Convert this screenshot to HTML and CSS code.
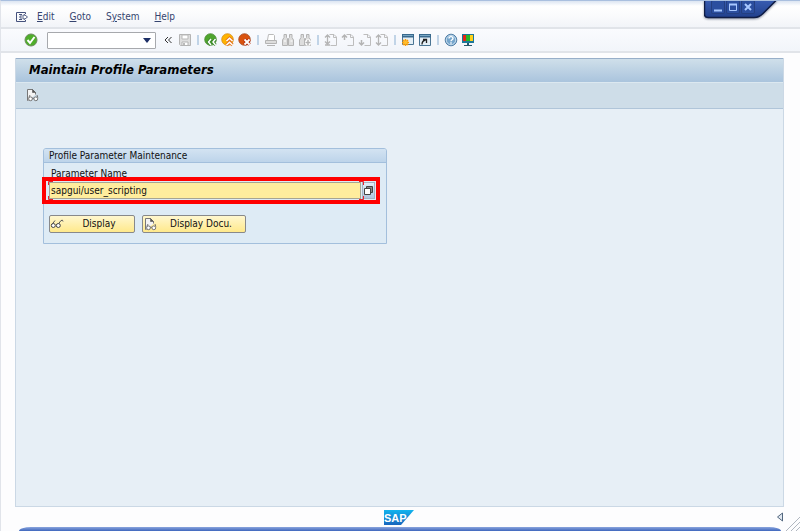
FILE: index.html
```html
<!DOCTYPE html>
<html lang="en">
<head>
    <meta charset="UTF-8">
    <meta name="viewport" content="width=device-width, initial-scale=1.0">
    <title>Maintain Profile Parameters</title>
    <link rel="stylesheet" href="styles.css">
</head>
<body>
    <!-- Shared icon shapes -->
    <svg class="sprite" aria-hidden="true">
        <symbol id="i-doc-glasses" viewBox="0 0 14 14">
            <path d="M3.500 12.500h-1V1.500h5l3 3v2" fill="#f4f4f4" stroke="#777"/>
            <path d="M7.500 1.500v3h3z" fill="#555" stroke="#555" stroke-width=".6"/>
            <path d="M5 7L3.800 9.500M12 7l.8 2.500M7 10.500q1-1 2 0" fill="none" stroke="#666" stroke-width=".9"/>
            <circle cx="5.500" cy="10.800" r="1.900" fill="#fff" stroke="#666" stroke-width=".9"/>
            <circle cx="10.800" cy="10.800" r="1.900" fill="#fff" stroke="#666" stroke-width=".9"/>
        </symbol>
        <symbol id="i-page" viewBox="0 0 14 14">
            <path d="M5.500 1.500h4.500l2.500 2.500v8.500h-6M9.500 1.500v3h3" fill="none" stroke="#bdbdbd"/>
        </symbol>
    </svg>

    <div class="window">
        <div class="window-controls">
            <svg class="controls-shape" viewBox="0 0 96 20" aria-hidden="true">
                <defs>
                    <linearGradient id="tab" x1="0" y1="0" x2="0" y2="1">
                        <stop offset="0" stop-color="#395db2"/>
                        <stop offset="1" stop-color="#203f8b"/>
                    </linearGradient>
                </defs>
                <path d="M0 0V14Q0 18 4 18H50Q55 18 59 14L73 0z" fill="url(#tab)"/>
                <path d="M.5 0V14Q.5 17.500 4 17.500H50Q55 17.500 59 13.500L72.500 0" fill="none" stroke="#101d45" stroke-width="1.500"/>
            </svg>
            <button aria-label="Minimize"><svg viewBox="0 0 12 12"><path d="M2 9.500h8" stroke="#a9c8ff" stroke-width="2"/></svg></button>
            <button aria-label="Maximize"><svg viewBox="0 0 12 12"><path d="M2.500 3v6.500h7V3" fill="none" stroke="#a9c8ff"/><path d="M2 3.500h8" stroke="#a9c8ff" stroke-width="2"/></svg></button>
            <button aria-label="Close"><svg viewBox="0 0 12 12"><path d="M3 3l6 6M9 3L3 9" stroke="#a9c8ff" stroke-width="2"/></svg></button>
        </div>

        <nav class="menu-bar">
            <button class="icon-button" aria-label="Menu">
                <svg viewBox="0 0 14 14"><path d="M10.500 4V2.500h-9v9h9V10M4 4.500h3M4 9.500h3" fill="none" stroke="#44517c"/><path d="M5 6h4V4.300L12.500 7 9 9.700V8H5z" fill="#fff" stroke="#44517c" stroke-width=".9"/></svg>
            </button>
            <a href="#"><u>E</u>dit</a>
            <a href="#"><u>G</u>oto</a>
            <a href="#">S<u>y</u>stem</a>
            <a href="#"><u>H</u>elp</a>
        </nav>

        <div class="toolbar">
            <button class="icon-button" aria-label="Enter">
                <svg viewBox="0 0 14 14"><circle cx="7" cy="7" r="6" fill="#4fae2b" stroke="#6c8a5c"/><path d="M3.500 7l2.500 3 4.500-6" fill="none" stroke="#fff" stroke-width="2"/></svg>
            </button>
            <div class="command">
                <input type="text" aria-label="Command">
                <svg viewBox="0 0 8 5" aria-hidden="true"><path d="M0 0h8L4 5z" fill="#1d2f66"/></svg>
            </div>
            <button class="icon-button" aria-label="Hide command field">
                <svg viewBox="0 0 14 14"><path d="M7 4L4 7l3 3M10.500 4l-3 3 3 3" fill="none" stroke="#333"/></svg>
            </button>
            <button class="icon-button" aria-label="Save" disabled>
                <svg viewBox="0 0 14 14"><path d="M1.500 1.500h11v11h-10l-1-1z" fill="#dedede" stroke="#b4b4b4"/><path d="M4 2h6v4H4z" fill="#fff" stroke="#b9b9b9"/><path d="M4 9h6v3.500H4z" fill="#fff" stroke="#b4b4b4"/><path d="M5 10h2v2H5z" fill="#bbb"/></svg>
            </button>
            <span class="separator"></span>
            <button class="icon-button" aria-label="Back">
                <svg viewBox="0 0 14 14"><circle cx="6.500" cy="6.500" r="5.800" fill="#4fa52d" stroke="#4a8936" stroke-width=".8"/><path d="M7 6L4.500 9 7 12M11.500 6L9 9l2.500 3" fill="none" stroke="#35832a" stroke-width="3"/><path d="M7 6L4.500 9 7 12M11.500 6L9 9l2.500 3" fill="none" stroke="#fff" stroke-width="1.500"/></svg>
            </button>
            <button class="icon-button" aria-label="Exit">
                <svg viewBox="0 0 14 14"><circle cx="6.500" cy="6.500" r="5.800" fill="#ffb400" stroke="#d48a1a" stroke-width=".8"/><path d="M5.500 8L8.500 5.200 11.500 8M5.500 12l3-2.800 3 2.800" fill="none" stroke="#e5761c" stroke-width="3.200"/><path d="M5.500 8L8.500 5.200 11.500 8M5.500 12l3-2.800 3 2.800" fill="none" stroke="#fff" stroke-width="1.500"/></svg>
            </button>
            <button class="icon-button" aria-label="Cancel">
                <svg viewBox="0 0 14 14"><circle cx="6.500" cy="6.500" r="5.800" fill="#d9530f" stroke="#a3481f" stroke-width=".8"/><path d="M6.500 6.500l5 5M11.500 6.500l-5 5" stroke="#b5300e" stroke-width="3.600"/><path d="M6.500 6.500l5 5M11.500 6.500l-5 5" stroke="#fff" stroke-width="1.800"/></svg>
            </button>
            <span class="separator"></span>
            <button class="icon-button" aria-label="Print" disabled>
                <svg viewBox="0 0 14 14"><path d="M3.500 7l1-5.500h5l1 1V7" fill="#fff" stroke="#bbb"/><path d="M1.500 7.500h11v3h-11zM3 12.500h8" fill="#ddd" stroke="#b4b4b4"/></svg>
            </button>
            <button class="icon-button" aria-label="Find" disabled>
                <svg viewBox="0 0 14 14"><path d="M3 1.500h2.500v3l1 1v7h-5V7L3 4.500zM8.500 1.500H11v3L12.500 7v5.500h-5v-7l1-1z" fill="#ddd" stroke="#b4b4b4"/><path d="M3 8h2M9.500 8h2" stroke="#fff"/></svg>
            </button>
            <button class="icon-button" aria-label="Find next" disabled>
                <svg viewBox="0 0 14 14"><path d="M3 1.500h2.500v3l1 1v7h-5V7L3 4.500zM8.500 1.500H11v3L12.500 7v5.500h-5v-7l1-1z" fill="#ddd" stroke="#b4b4b4"/><path d="M10 6.500v6M7 9.500h6" stroke="#fff" stroke-width="4"/><path d="M10 7v5M7.500 9.500h5" stroke="#b4b4b4" stroke-width="1.500"/></svg>
            </button>
            <span class="separator"></span>
            <button class="icon-button" aria-label="First page" disabled>
                <svg viewBox="0 0 14 14"><use href="#i-page"/><path d="M3.500 2v10M1 4.500L3.500 2 6 4.500M1 8.500L3.500 11 6 8.500M1 12h5" fill="none" stroke="#b4b4b4" stroke-width="1.300"/></svg>
            </button>
            <button class="icon-button" aria-label="Previous page" disabled>
                <svg viewBox="0 0 14 14"><use href="#i-page"/><path d="M3.500 2v5M1 4.500L3.500 2 6 4.500" fill="none" stroke="#b4b4b4" stroke-width="1.500"/></svg>
            </button>
            <button class="icon-button" aria-label="Next page" disabled>
                <svg viewBox="0 0 14 14"><use href="#i-page"/><path d="M3.500 7v5M1 9.500L3.500 12 6 9.500" fill="none" stroke="#b4b4b4" stroke-width="1.500"/></svg>
            </button>
            <button class="icon-button" aria-label="Last page" disabled>
                <svg viewBox="0 0 14 14"><use href="#i-page"/><path d="M3.500 2v10M1 4.500L3.500 2 6 4.500M1 9.500L3.500 12 6 9.500" fill="none" stroke="#b4b4b4" stroke-width="1.300"/></svg>
            </button>
            <span class="separator"></span>
            <button class="icon-button" aria-label="New session">
                <svg viewBox="0 0 14 14"><path d="M1.500 1.500h11v10h-11z" fill="#e4eef5" stroke="#4a7594"/><path d="M1 1h12v3.500H1z" fill="#39698d"/><path d="M2 2.500h10" stroke="#78a6c4"/><path d="M4.500 6v7M1 9.500h7M2 7l5 5M7 7l-5 5" stroke="#ff9c00" stroke-width="1.500"/><circle cx="4.500" cy="9.500" r="1.800" fill="#ffc02c"/></svg>
            </button>
            <button class="icon-button" aria-label="Create shortcut">
                <svg viewBox="0 0 14 14"><path d="M1.500 1.500h11v11h-11z" fill="#e4eef5" stroke="#4a7594"/><path d="M1 1h12v3.500H1z" fill="#39698d"/><path d="M2 2.500h10" stroke="#78a6c4"/><path d="M4 11.500c0-3 1-4 3.500-4.500M5 6.500h3.500V10" fill="none" stroke="#222" stroke-width="1.300"/></svg>
            </button>
            <span class="separator"></span>
            <button class="icon-button" aria-label="Help">
                <svg viewBox="0 0 14 14"><circle cx="7" cy="7" r="5.800" fill="#75a5cc" stroke="#527fa7"/><circle cx="7" cy="7" r="4.700" fill="none" stroke="#d9e8f4" stroke-width=".8"/><path d="M5 5.500C5 3 9 3 9 5.500c0 1.200-2 1.300-2 2.700M7 9.300v1.400" fill="none" stroke="#fff" stroke-width="1.400"/></svg>
            </button>
            <button class="icon-button" aria-label="Customize local layout">
                <svg viewBox="0 0 14 14"><path d="M1 1h12v9H1z" fill="#1d7798"/><path d="M2 2h3v6H2z" fill="#e32719"/><path d="M5 2h4v6H5z" fill="#2bb526"/><path d="M9 2h3v6H9z" fill="#ffd21b"/><path d="M6 10h2v2h3v1H3v-1h3z" fill="#26586c"/></svg>
            </button>
        </div>

        <main class="screen">
            <h1>Maintain Profile Parameters</h1>
            <div class="app-toolbar">
                <button class="icon-button" aria-label="Display documentation"><svg viewBox="0 0 14 14"><use href="#i-doc-glasses"/></svg></button>
            </div>
            <div class="content">
                <form class="group">
                    <h2>Profile Parameter Maintenance</h2>
                    <div class="group-body">
                        <label for="param">Parameter Name</label>
                        <div class="field">
                            <input type="text" id="param" value="sapgui/user_scripting">
                            <button type="button" aria-label="Possible entries">
                                <svg viewBox="0 0 11 11"><path d="M3.500 1.500h6v6h-6z" fill="#888" stroke="#444"/><path d="M1.500 3.500h6v6h-6z" fill="#fff" stroke="#444"/></svg>
                            </button>
                            <svg class="focus-mark start" viewBox="0 0 5 19" aria-hidden="true"><path d="M5 .5H.5V4M.5 15v3.500H5" fill="none" stroke="#e8202c"/></svg>
                            <svg class="focus-mark end" viewBox="0 0 5 19" aria-hidden="true"><path d="M0 .5h4.500V4M4.500 15v3.500H0" fill="none" stroke="#e8202c"/></svg>
                        </div>
                        <div class="actions">
                            <button type="button" class="action">
                                <svg viewBox="0 0 14 14"><path d="M1.500 8L5 3.500M8 7.500l3-4q2-1 2 1" fill="none" stroke="#555"/><circle cx="3.300" cy="8.500" r="2" fill="#fff" stroke="#444"/><circle cx="8.300" cy="8.500" r="2" fill="#fff" stroke="#444"/></svg>
                                <span>Display</span>
                            </button>
                            <button type="button" class="action wide">
                                <svg viewBox="0 0 14 14"><use href="#i-doc-glasses"/></svg>
                                <span>Display Docu.</span>
                            </button>
                        </div>
                    </div>
                </form>
            </div>
        </main>

        <footer class="status-bar">
            <svg class="logo" viewBox="0 0 30 15" role="img" aria-label="SAP">
                <defs>
                    <linearGradient id="sap" x1="0" y1="0" x2="0" y2="1">
                        <stop offset="0" stop-color="#12b4ee"/>
                        <stop offset="1" stop-color="#1765bd"/>
                    </linearGradient>
                </defs>
                <path d="M0 0h30L17 15H0z" fill="url(#sap)"/>
                <text x="0" y="12">SAP</text>
            </svg>
            <button class="expand" aria-label="Show status">
                <svg viewBox="0 0 8 10"><path d="M6.500 1v8L1.500 5z" fill="#e1e8f0" stroke="#52677f"/></svg>
            </button>
            <svg class="grip" viewBox="0 0 14 14" aria-hidden="true"><path d="M0 14L14 0M5 14l9-9M10 14l4-4" stroke="#b0b7c0"/></svg>
        </footer>
        <div class="bottom-edge"></div>
    </div>
</body>
</html>
```
FILE: styles.css
```css
* {
    margin: 0;
    padding: 0;
    box-sizing: border-box;
}

:root {
    --line: #a3bfdc;
    --text: #111111;
    --menu-text: #35446f;
}

body {
    background-color: #fdfdfe;
    color: var(--text);
    font-family: 'DejaVu Sans Condensed', 'DejaVu Sans', sans-serif;
    font-size: 10px;
    line-height: 14px;
}

button, input {
    font: inherit;
    color: inherit;
    border: none;
    background: none;
}

svg {
    display: block;
}

.sprite {
    position: absolute;
    width: 0;
    height: 0;
}

.window {
    position: relative;
    display: flex;
    flex-direction: column;
    min-height: 100vh;
    border-top: 1px solid #a9bfdf;
    border-left: 1px solid #e1e4ea;
    overflow: hidden;
}

.icon-button {
    flex: none;
    width: 14px;
    height: 14px;
}

/* Window buttons hang over the menu bar */
.window-controls {
    position: absolute;
    top: -1px;
    right: 0;
    width: 96px;
    height: 20px;
    display: flex;
    gap: 3px;
    padding: 1px 8px;
}

.controls-shape {
    position: absolute;
    top: 0;
    left: 0;
    width: 96px;
    height: 20px;
    filter: drop-shadow(0 1px 1px #8c93a3);
}

.window-controls button {
    position: relative;
    width: 12px;
    height: 12px;
    background-color: #2b4e9f;
    box-shadow: 0 0 0 1px #243f80;
    border-radius: 1px;
}

.menu-bar {
    display: flex;
    align-items: center;
    gap: 15px;
    height: 28px;
    padding: 5px 14px 0;
    background: linear-gradient(#dce5f2, #ffffff 5px, #f9fafc 16px, #f2f4f8);
    border-bottom: 2px solid #e1e4e9;
}

.menu-bar .icon-button {
    margin-right: -7px;
}

.menu-bar a {
    color: var(--menu-text);
    text-decoration: none;
}

.toolbar {
    display: flex;
    align-items: center;
    gap: 3px;
    height: 24px;
    padding: 0 23px;
    background: linear-gradient(#fafbfe, #f2f5fa);
    border-bottom: 2px solid #e1e4e9;
}

.separator {
    width: 2px;
    height: 10px;
    margin: 0 2px;
    background-color: #c1d4e7;
}

.command {
    display: flex;
    align-items: center;
    width: 109px;
    height: 17px;
    margin: 0 2px 0 6px;
    padding-right: 4px;
    background-color: #ffffff;
    border: 1px solid #a7a9ad;
    border-radius: 1px;
}

.command input {
    flex: 1;
    min-width: 0;
}

.command svg {
    width: 8px;
    height: 5px;
}

.screen {
    flex: 1;
    display: flex;
    flex-direction: column;
    margin: 5px 16px 0 14px;
    border: 1px solid #cbd8e5;
    border-top: 0;
    background-color: #e7eff6;
}

.screen h1 {
    height: 24px;
    padding-left: 13px;
    font-size: 13px;
    font-style: italic;
    line-height: 22px;
    color: #000000;
    background: linear-gradient(#cfdfea, #aac4dd);
    border-top: 1px solid #98afc9;
}

.app-toolbar {
    display: flex;
    align-items: center;
    height: 27px;
    padding: 0 9px 2px;
    background-color: #cedde8;
    border-top: 1px solid #dce8f0;
    border-bottom: 1px solid #b0c5d9;
}

.content {
    flex: 1;
    padding: 39px 27px;
}

.group {
    max-width: 344px;
    border: 1px solid var(--line);
    border-radius: 3px 3px 0 0;
    background-color: #deebf5;
}

.group h2 {
    height: 14px;
    padding-left: 5px;
    font-size: 10px;
    font-weight: normal;
    line-height: 14px;
    background: linear-gradient(#d3e3f2, #bdd4ea);
    border-bottom: 1px solid var(--line);
    border-radius: 2px 2px 0 0;
}

.group-body {
    padding: 4px 11px 10px 5px;
}

.group-body label {
    display: block;
    margin-bottom: 1px;
    padding-left: 2px;
}

.field {
    position: relative;
    display: flex;
    gap: 1px;
    height: 17px;
}

/* Red frame around the parameter field */
.field::after {
    content: "";
    position: absolute;
    inset: -5px -5px -5px -7px;
    border: 4px solid #ff0000;
    pointer-events: none;
}

.field input {
    flex: 1;
    min-width: 0;
    padding-left: 1px;
    background-color: #ffed9d;
    border: 1px solid #a7a592;
}

.field button {
    width: 13px;
    background: linear-gradient(#e3edf7, #afc6df);
    border: 1px solid #a5b3c3;
}

.field button svg {
    width: 11px;
    height: 11px;
}

.focus-mark {
    position: absolute;
    top: -1px;
    width: 5px;
    height: 19px;
}

.focus-mark.start {
    left: -1px;
}

.focus-mark.end {
    right: 11px;
}

.actions {
    display: flex;
    gap: 7px;
    margin-top: 16px;
}

.action {
    display: flex;
    align-items: center;
    width: 86px;
    height: 18px;
    background: linear-gradient(#fff7cf, #ffe98b);
    border: 1px solid #88898b;
    border-radius: 2px;
}

.action.wide {
    width: 104px;
}

.action svg {
    width: 14px;
    height: 14px;
}

.action span {
    flex: 1;
    text-align: center;
}

.status-bar {
    position: relative;
    display: flex;
    align-items: center;
    justify-content: center;
    height: 20px;
    padding-right: 3px;
}

.logo {
    width: 30px;
    height: 15px;
}

.logo text {
    font-family: 'Liberation Sans', sans-serif;
    font-size: 11px;
    font-weight: bold;
    fill: #ffffff;
}

.expand {
    position: absolute;
    right: 16px;
    width: 8px;
    height: 10px;
}

.grip {
    position: absolute;
    right: 0;
    bottom: -4px;
    width: 14px;
    height: 14px;
}

.bottom-edge {
    height: 4px;
    margin: 0 19px 0 18px;
    background: linear-gradient(#8aa5dd, #3f67bd);
    border-radius: 12px 12px 0 0 / 4px 4px 0 0;
}
```
